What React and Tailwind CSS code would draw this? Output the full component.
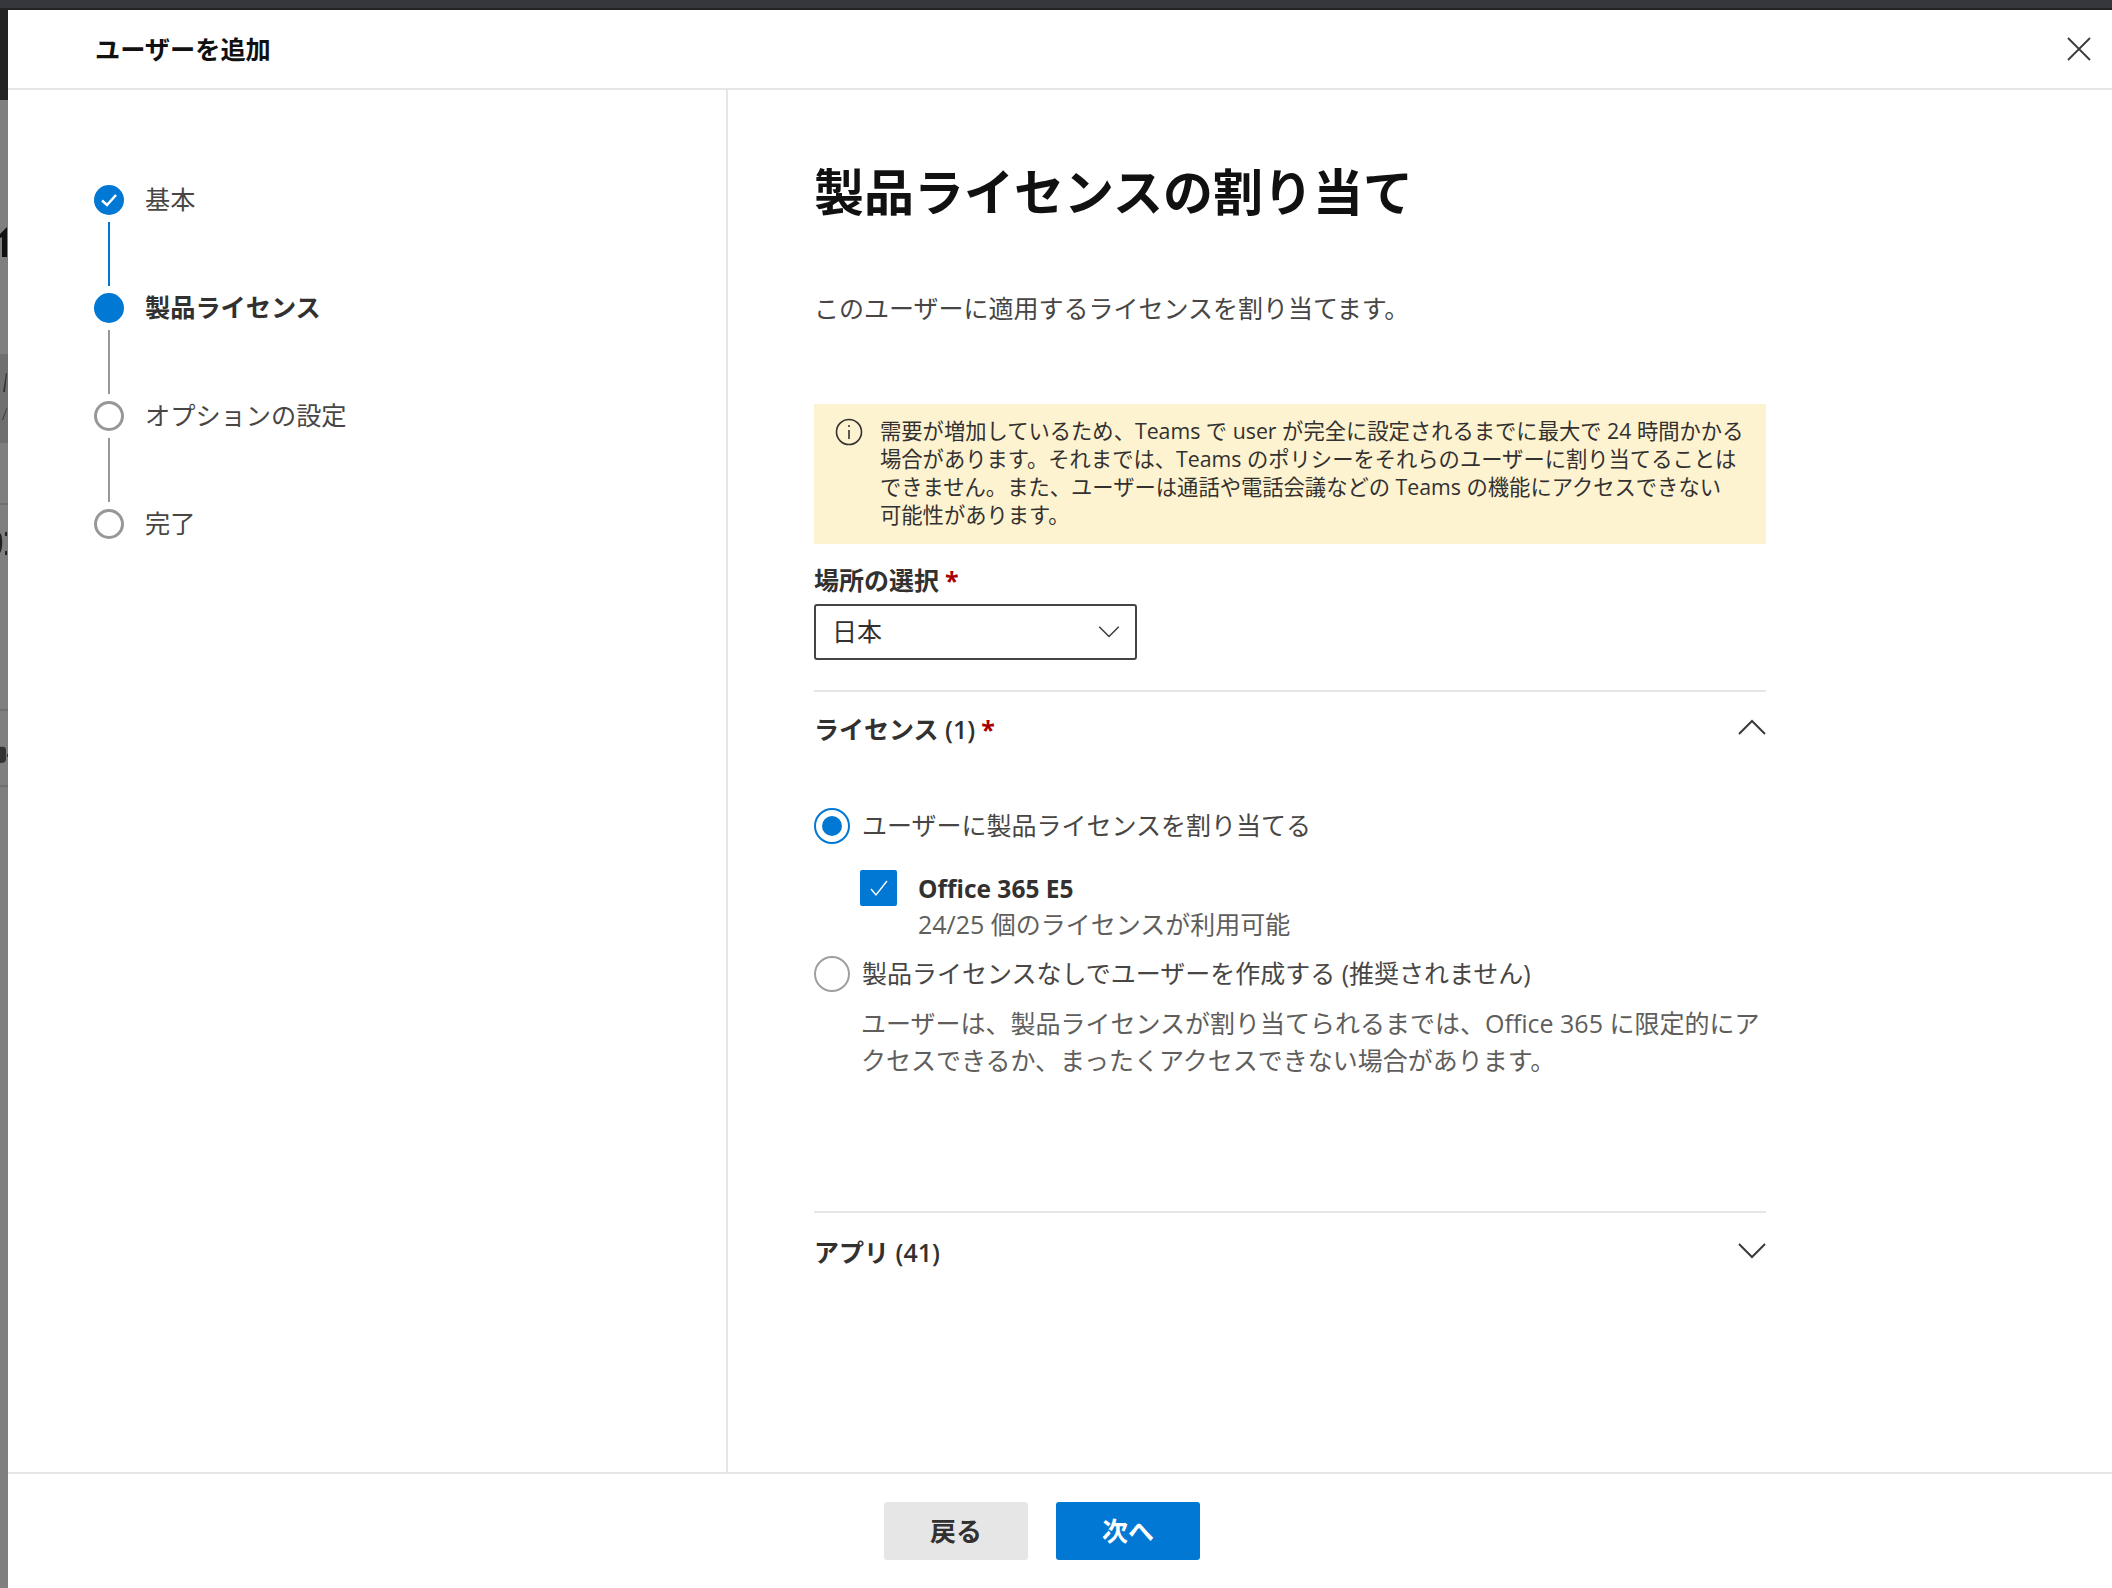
import React from "react";

const font = "font-['Open_Sans','Noto_Sans_CJK_JP',sans-serif]";

const steps = [
  { label: "基本", state: "done" },
  { label: "製品ライセンス", state: "current" },
  { label: "オプションの設定", state: "todo" },
  { label: "完了", state: "todo" },
];

const Chevron = ({ up, className }) => (
  <svg viewBox="0 0 28 16" fill="none" stroke="#3b3a39" strokeWidth="2" className={className}>
    <path d={up ? "M1 15 14 2l13 13" : "M1 1l13 13L27 1"} />
  </svg>
);

const StepDot = ({ state }) => {
  if (state === "done") {
    return (
      <div className="flex h-[30px] w-[30px] items-center justify-center rounded-full bg-[#0078d4]">
        <svg viewBox="0 0 18 18" fill="none" stroke="#fff" strokeWidth="2.6" className="h-[18px] w-[18px]">
          <path d="M2 9.5 7 14 16 4" />
        </svg>
      </div>
    );
  }
  if (state === "current") return <div className="h-[30px] w-[30px] rounded-full bg-[#0078d4]" />;
  return <div className="h-[30px] w-[30px] rounded-full border-[3px] border-[#979797] bg-white" />;
};

const Stepper = () => (
  <div className="flex w-[720px] shrink-0 flex-col border-r-2 border-[#e6e6e6] pl-[86px] pt-[95px]">
    {steps.map((step, i) => (
      <div key={step.label}>
        <div className="flex h-[30px] items-center gap-[21px]">
          <StepDot state={step.state} />
          <span
            className={
              step.state === "current"
                ? "text-[25.2px] font-bold text-[#323130]"
                : "text-[25.2px] text-[#484644]"
            }
          >
            {step.label}
          </span>
        </div>
        {i < steps.length - 1 && (
          <div
            className={
              i === 0
                ? "ml-[14px] my-[7px] h-[64px] w-[2px] bg-[#0078d4]"
                : "ml-[14px] my-[7px] h-[64px] w-[2px] bg-[#979797]"
            }
          />
        )}
      </div>
    ))}
  </div>
);

const Required = () => <span className="ml-[6px] font-bold text-[#a80000]">*</span>;

const LeftStrip = () => (
  <div className="relative flex w-[8px] shrink-0 flex-col overflow-hidden bg-[#7f7f7f]">
    <div className="h-[90px] bg-[#232323]" />
    <div className="mt-[254px] h-[89px] bg-[#6f6f6f]" />
    <div className="mt-[60px] h-[2px] bg-[#707070]" />
    <div className="mt-[204px] h-[2px] bg-[#707070]" />
    <div className="mt-[74px] h-[2px] bg-[#707070]" />
    <svg viewBox="0 0 8 600" className="absolute left-0 top-[210px] h-[600px] w-[8px]" fill="#111">
      <path d="M0 14l7-7v30H2V17l-2 1z" />
      <path d="M6 153l1 0-2 19H3zM7 187v2L3 200H2z" fill="#333" />
      <path d="M0 313c3 2 3 16 0 20zM5 312h2v4H5zM5 331h2v4H5z" fill="#222" />
      <path d="M0 527c4-1 6 0 6 3v9c0 3-2 4-6 4zM7 534h1v3H7z" fill="#333" />
    </svg>
  </div>
);

const InfoBanner = () => (
  <div className="flex h-[140px] items-start bg-[#fdf3d0] pl-[21px] pr-[16px] pt-[13px]">
    <svg viewBox="0 0 28 28" fill="none" stroke="#323130" strokeWidth="1.6" className="mt-[1px] h-[28px] w-[28px] shrink-0">
      <circle cx="14" cy="14" r="12.5" />
      <path d="M14 12v9" />
      <circle cx="14" cy="8" r="1" fill="#323130" stroke="none" />
    </svg>
    <p className="ml-[17px] whitespace-nowrap text-[21.3px] leading-[28px] text-[#323130]">
      需要が増加しているため、Teams で user が完全に設定されるまでに最大で 24 時間かかる
      <br />
      場合があります。それまでは、Teams のポリシーをそれらのユーザーに割り当てることは
      <br />
      できません。また、ユーザーは通話や電話会議などの Teams の機能にアクセスできない
      <br />
      可能性があります。
    </p>
  </div>
);

const LicenseOptions = () => (
  <div className="flex flex-col text-[25px] text-[#484644]">
    <div className="flex h-[36px] items-center gap-[12px]">
      <div className="flex h-[36px] w-[36px] items-center justify-center rounded-full border-2 border-[#0078d4]">
        <div className="h-[20px] w-[20px] rounded-full bg-[#0078d4]" />
      </div>
      <span>ユーザーに製品ライセンスを割り当てる</span>
    </div>
    <div className="ml-[46px] mt-[26px] flex items-start gap-[21px]">
      <div className="flex h-[36px] w-[37px] shrink-0 items-center justify-center rounded-[2px] bg-[#0078d4]">
        <svg viewBox="0 0 20 20" fill="none" stroke="#fff" strokeWidth="1.4" className="h-[20px] w-[20px]">
          <path d="M2 11l5 6L18 3" />
        </svg>
      </div>
      <div className="flex flex-col">
        <span className="h-[36px] text-[24.5px] font-bold leading-[38px] text-[#323130]">Office 365 E5</span>
        <span className="h-[35px] leading-[36px] text-[#605e5c]">24/25 個のライセンスが利用可能</span>
      </div>
    </div>
    <div className="mt-[15px] flex h-[36px] items-center gap-[12px]">
      <div className="h-[36px] w-[36px] rounded-full border-2 border-[#a19f9d]" />
      <span>製品ライセンスなしでユーザーを作成する (推奨されません)</span>
    </div>
    <p className="ml-[47px] mt-[13px] whitespace-nowrap text-[25px] leading-[37px] text-[#605e5c]">
      ユーザーは、製品ライセンスが割り当てられるまでは、Office 365 に限定的にア
      <br />
      クセスできるか、まったくアクセスできない場合があります。
    </p>
  </div>
);

const LicensePanel = () => (
  <div className="flex min-w-0 flex-1 flex-col pl-[86px] pt-[70px]">
    <h1 className="h-[64px] text-[50px] font-bold leading-[64px] text-[#111]">製品ライセンスの割り当て</h1>
    <p className="mt-[66px] h-[36px] text-[25px] leading-[36px] text-[#484644]">
      このユーザーに適用するライセンスを割り当てます。
    </p>
    <div className="mt-[78px] flex w-[952px] flex-col">
      <InfoBanner />
      <label className="mt-[18px] h-[42px] text-[25px] font-bold leading-[36px] text-[#323130]">
        場所の選択
        <Required />
      </label>
      <div className="flex h-[56px] w-[323px] items-center justify-between rounded-[3px] border-2 border-[#444] pl-[16px] pr-[15px] text-[25px] text-[#323130]">
        <span>日本</span>
        <Chevron className="h-[12px] w-[22px]" />
      </div>
      <div className="mt-[30px] flex h-[78px] items-center justify-between border-t-2 border-[#e6e6e6]">
        <span className="text-[25px] font-bold text-[#323130]">
          ライセンス <span className="font-semibold">(1)</span>
          <Required />
        </span>
        <Chevron up className="mb-[6px] h-[16px] w-[28px]" />
      </div>
      <div className="mt-[40px]">
        <LicenseOptions />
      </div>
      <div className="mt-[132px] flex h-[82px] items-center justify-between border-t-2 border-[#e6e6e6]">
        <span className="text-[25px] font-bold text-[#323130]">
          アプリ <span className="font-semibold">(41)</span>
        </span>
        <Chevron className="mb-[4px] h-[16px] w-[28px]" />
      </div>
    </div>
  </div>
);

const Footer = () => (
  <div className="flex h-[116px] shrink-0 gap-[28px] border-t-2 border-[#e6e6e6] pl-[876px] pt-[28px]">
    <button className="h-[58px] w-[144px] rounded-[3px] bg-[#e6e6e6] text-[26px] font-bold text-[#323130]">戻る</button>
    <button className="h-[58px] w-[144px] rounded-[3px] bg-[#0078d4] text-[26px] font-bold text-white">次へ</button>
  </div>
);

export default function App() {
  return (
    <div className={`flex h-[1588px] w-[2112px] flex-col overflow-hidden bg-white ${font}`}>
      <div className="h-[10px] shrink-0 border-b-2 border-[#232323] bg-[#36373c]" />
      <div className="flex min-h-0 flex-1">
        <LeftStrip />
        <div className="flex min-w-0 flex-1 flex-col">
          <div className="flex h-[80px] shrink-0 items-center justify-between border-b-2 border-[#e6e6e6] pl-[87px] pr-[21px]">
            <h2 className="pt-[2px] text-[25.2px] font-bold text-[#111]">ユーザーを追加</h2>
            <svg viewBox="0 0 24 24" fill="none" stroke="#3b3a39" strokeWidth="1.8" className="h-[24px] w-[24px]">
              <path d="M1 1l22 22M23 1 1 23" />
            </svg>
          </div>
          <div className="flex min-h-0 flex-1">
            <Stepper />
            <LicensePanel />
          </div>
          <Footer />
        </div>
      </div>
    </div>
  );
}
